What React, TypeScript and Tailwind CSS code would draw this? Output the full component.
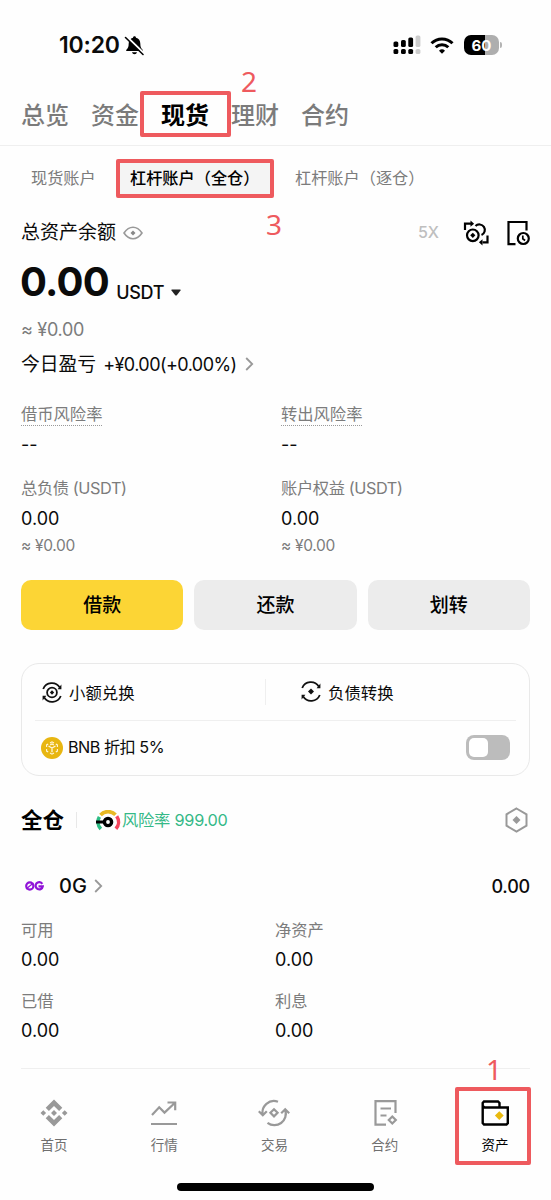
import { useState } from 'react';
import type { ReactNode } from 'react';

interface Metric {
  label: string;
  value: string;
  approx?: string;
  dotted?: boolean;
}

const tabs = ['总览', '资金', '现货', '理财', '合约'];

const riskMetrics: Metric[] = [
  { label: '借币风险率', value: '--', dotted: true },
  { label: '转出风险率', value: '--', dotted: true },
];

const equityMetrics: Metric[] = [
  { label: '总负债 (USDT)', value: '0.00', approx: '≈ ¥0.00' },
  { label: '账户权益 (USDT)', value: '0.00', approx: '≈ ¥0.00' },
];

function StatusBar() {
  return (
    <div className="flex h-[90px] items-center pr-[49px] pl-[59px]">
      <span className="text-[23px] leading-none font-semibold tracking-[-0.2px]">10:20</span>
      <svg className="ml-1" width="21" height="21" viewBox="0 0 21 21">
        <path
          d="M10.5 1.2c-.9 0-1.5.6-1.5 1.5-2.8.7-4.3 2.9-4.3 5.8 0 3.8-1 5-2.3 6.2-.5.5-.3 1.3.5 1.3h15.2c.8 0 1-.8.5-1.3-1.3-1.2-2.3-2.4-2.3-6.2 0-2.9-1.5-5.1-4.3-5.8 0-.9-.6-1.5-1.5-1.5z"
          fill="#000"
        />
        <path d="M8 17.3h5c-.3 1.3-1.3 2-2.5 2s-2.2-.7-2.5-2z" fill="#000" />
        <path d="M3 2.2l17 16.5" stroke="#fefefe" strokeWidth="2.4" />
        <path d="M1.5 2.5l17.5 17" stroke="#000" strokeWidth="1.6" strokeLinecap="round" />
      </svg>
      <svg className="ml-auto" width="28" height="20" viewBox="0 0 28 20">
        <rect x="0.5" y="6.5" width="4.8" height="5.5" rx="1.6" />
        <rect x="8" y="5" width="4.8" height="7" rx="1.6" />
        <rect x="15.3" y="2.5" width="4.8" height="9.5" rx="1.6" />
        <rect x="22.6" y="0.5" width="4.8" height="11.5" rx="1.6" fill="#ccc" />
        <rect x="0.5" y="14" width="4.8" height="5" rx="1.6" />
        <rect x="8" y="14" width="4.8" height="5" rx="1.6" />
        <rect x="15.3" y="14" width="4.8" height="5" rx="1.6" />
        <rect x="22.6" y="14" width="4.8" height="5" rx="1.6" fill="#ccc" />
      </svg>
      <svg className="ml-[9px]" width="24" height="19" viewBox="0 0 24 19" fill="none" stroke="#000" strokeWidth="3">
        <path d="M1.5 7.2a15 15 0 0 1 21 0" />
        <path d="M5.7 11.3a9 9 0 0 1 12.6 0" />
        <path d="M12 17.8l-3-3.1a4.3 4.3 0 0 1 6 0z" fill="#000" stroke="none" />
      </svg>
      <div className="ml-[10px] flex items-center gap-px">
        <div className="flex h-5 w-[35px] items-center justify-center rounded-[7px] bg-[linear-gradient(90deg,#000_61%,#aeaeae_61%)] text-[15px] leading-none font-bold text-white">
          60
        </div>
        <div className="h-[6px] w-[2px] rounded-r bg-[#b4b4b4]" />
      </div>
    </div>
  );
}

function Chevron({ className = '' }: { className?: string }) {
  return (
    <svg className={className} width="9" height="14" viewBox="0 0 9 14" fill="none" stroke="#999" strokeWidth="1.8">
      <path d="M1.2 1l6 6-6 6" />
    </svg>
  );
}

function MetricCell({ label, value, approx, dotted }: Metric) {
  return (
    <div>
      <div className="flex h-9 items-center text-[16.3px] text-[#7c7c7c]">
        <span
          className={
            dotted
              ? 'h-6 border-b border-dotted border-[#999] leading-[24px]'
              : 'leading-6 tracking-[-0.4px]'
          }
        >
          {label}
        </span>
      </div>
      <div className="flex h-6 items-center text-[18px]">{value}</div>
      {approx && (
        <div className="flex h-8 items-center text-[15.5px] tracking-[-0.3px] text-[#7c7c7c]">{approx}</div>
      )}
    </div>
  );
}

function AssetCell({ label }: { label: string }) {
  return (
    <div>
      <div className="flex h-8 items-center text-[16.3px] text-[#7c7c7c]">{label}</div>
      <div className="flex h-[26px] items-center text-[18px]">0.00</div>
    </div>
  );
}

function SwapCoinIcon() {
  return (
    <svg width="27" height="26" viewBox="0 0 27 26" fill="none" stroke="#000" strokeWidth="2.2">
      <path d="M2 10V3.7h6" />
      <path d="M7.5 .6l3.6 3.1-3.600 3.100z" fill="#000" stroke="none" />
      <path d="M24.5 15.500v6.800h-5" />
      <path d="M19.5 19.200l-3.600 3.100 3.600 3.100z" fill="#000" stroke="none" />
      <circle cx="9.8" cy="15.3" r="5.8" />
      <path d="M12.5 6a5.5 5.5 0 1 1 6 9" />
      <path d="M9.8 12.7l2.6 2.6-2.6 2.6-2.6-2.6z" fill="#000" stroke="none" />
    </svg>
  );
}

function HistoryIcon() {
  return (
    <svg width="24" height="26" viewBox="0 0 24 26" fill="none" stroke="#000" strokeWidth="2.2">
      <path d="M20.5 10.5V2H2.500v22.200h7" />
      <circle cx="17.3" cy="18.5" r="5.5" />
      <path d="M16.8 15.5v3.3l2.3 1.7" strokeWidth="1.7" />
    </svg>
  );
}

function ConvertIcon({ ring }: { ring?: boolean }) {
  return (
    <svg width="20" height="21" viewBox="0 0 20 21" fill="none" stroke="#111" strokeWidth="1.8">
      <path d="M1.2 7A9.4 9.4 0 0 1 17.8 5.500" />
      <path d="M18.8 14A9.4 9.4 0 0 1 2.200 15.500" />
      <path d="M19.4 2.400v4.800h-3.800zM.6 18.600v-4.800h3.800z" fill="#111" stroke="none" />
      {ring && <circle cx="10" cy="10.5" r="4.9" />}
      <path
        d={ring ? 'M10 8.3l2.2 2.2-2.2 2.2-2.2-2.2z' : 'M10 7.5l3 3-3 3-3-3z'}
        fill="#111"
        stroke="none"
      />
    </svg>
  );
}

function BnbIcon() {
  return (
    <svg width="22" height="22" viewBox="0 0 22 22" fill="none">
      <circle cx="11" cy="11" r="11" fill="#e8b611" />
      <g stroke="#fff6dc" strokeWidth="1.1">
        <path d="M9 5.900l2-1.100 2 1.100M14.800 7l1.600.9v2M16.400 12.100v2l-1.600.9M13 16.100l-2 1.100-2-1.100M7.200 15l-1.600-.9v-2M5.600 9.900v-2L7.200 7" />
        <path d="M7.500 9l3.500 2 3.500-2M11 11v4.200M9.200 7.900l1.800-1 1.800 1" strokeWidth="1.3" />
      </g>
    </svg>
  );
}

function GaugeIcon() {
  return (
    <svg width="25" height="21" viewBox="0 0 25 21" fill="none" strokeWidth="3.6">
      <path d="M4.8 19A10.2 10.2 0 0 1 3.4 6.8" stroke="#2ebd85" />
      <path d="M4.5 5a10.2 10.2 0 0 1 15-.2" stroke="#e8b924" />
      <path d="M20.7 6.2a10.2 10.2 0 0 1-.8 12.6" stroke="#f6465d" />
      <circle cx="12" cy="12" r="3.6" fill="#fefefe" stroke="#000" strokeWidth="3.4" />
      <path d="M0 12h9" stroke="#000" strokeWidth="3" />
    </svg>
  );
}

function HomeIcon() {
  return (
    <svg width="28" height="28" viewBox="0 0 28 28" fill="#999">
      <path d="M14 .5l8.3 8.3-3.2 3.2L14 6.9 8.9 12l-3.2-3.2z" />
      <path d="M14 27.5l8.3-8.3-3.2-3.2-5.1 5.1L8.900 16l-3.200 3.200z" />
      <path d="M14 11l3 3-3 3-3-3zM3.3 11.2L6.1 14l-2.8 2.8L.5 14zM24.7 11.2l2.8 2.8-2.8 2.8-2.8-2.8z" />
    </svg>
  );
}

function MarketIcon() {
  return (
    <svg width="28" height="28" viewBox="0 0 28 28" fill="none" stroke="#999" strokeWidth="2.2">
      <path d="M2 16l7.2-7.7 5.3 5.3L25 3.8M17.5 3.5h7.7v7.7M1 25h26" />
    </svg>
  );
}

function TradeIcon() {
  return (
    <svg width="32" height="28" viewBox="0 0 32 28" fill="none" stroke="#999" strokeWidth="2.2">
      <path d="M20 2.8A11.4 11.4 0 0 0 4.8 16M.8 12.2l4 4 4-4" />
      <path d="M9.5 23.8A11.4 11.4 0 0 0 27.2 11M23.2 14.2l4-4 4 4" />
      <path d="M16 10.2l3.6 3.6-3.6 3.600-3.600-3.600z" />
    </svg>
  );
}

function FuturesIcon() {
  return (
    <svg width="28" height="28" viewBox="0 0 28 28" fill="none" stroke="#999" strokeWidth="2.2">
      <path d="M24.5 14V2.2h-20v23.500H15M9.500 9.500H20M9.500 16.500h6" />
      <path d="M21.3 17.5l3.500 3.500-3.500 3.500-3.500-3.500z" />
    </svg>
  );
}

function WalletIcon() {
  return (
    <svg width="28" height="28" viewBox="0 0 28 28" fill="none" stroke="#000" strokeWidth="2.4">
      <path d="M18.5 7.5V4L17 2.5H3L1.7 4v20L3 25.5h22.5l1.3-1.3V8.5H3.5L1.7 7" />
      <path d="M18.3 12.2l4.4 4.4-4.4 4.4-4.4-4.4z" fill="#e9b90e" stroke="none" />
    </svg>
  );
}

// Red frame with its step number, laid over the element it points at
function Marker({ frame, step, stepClass }: { frame: string; step: string; stepClass: string }) {
  return (
    <>
      <div className={`pointer-events-none absolute rounded-[2px] border-4 border-[#ee5a5e] ${frame}`} />
      <span
        className={`pointer-events-none absolute font-['Noto_Sans','Open_Sans',sans-serif] text-[28px] leading-[30px] text-[#ee5a5e] ${stepClass}`}
      >
        {step}
      </span>
    </>
  );
}

const navItems: { label: string; icon: ReactNode }[] = [
  { label: '首页', icon: <HomeIcon /> },
  { label: '行情', icon: <MarketIcon /> },
  { label: '交易', icon: <TradeIcon /> },
  { label: '合约', icon: <FuturesIcon /> },
  { label: '资产', icon: <WalletIcon /> },
];

export default function App() {
  const [activeTab, setActiveTab] = useState('现货');
  const [discount, setDiscount] = useState(false);

  return (
    <div className="relative h-[1200px] w-[551px] overflow-hidden bg-[#fefefe] font-['Inter','Noto_Sans_CJK_SC',sans-serif] text-[#0b0b0b]">
      <StatusBar />

      {/* Tabs */}
      <nav className="flex h-14 gap-[22px] border-b border-[#efefef] pl-[21px]">
        {tabs.map((tab) => (
          <button
            key={tab}
            onClick={() => setActiveTab(tab)}
            className={`h-[52px] text-[24px] whitespace-nowrap ${
              tab === activeTab ? 'font-bold text-black' : 'font-medium text-[#7b7b7b]'
            }`}
          >
            {tab}
          </button>
        ))}
      </nav>

      {/* Account types */}
      <div className="flex h-16 items-center pl-[31px] text-[16.2px] whitespace-nowrap text-[#7c7c7c]">
        <span className="mt-px w-[65px]">现货账户</span>
        <span className="ml-6 flex h-[34px] w-[151px] items-center bg-[#f4f4f4] pt-px pl-[10px] font-medium text-black">
          杠杆账户（全仓）
        </span>
        <span className="mt-px ml-6">杠杆账户（逐仓）</span>
      </div>

      <main className="px-[21px]">
        {/* Balance */}
        <div className="flex h-11 items-center">
          <span className="mt-[3px] text-[19px]">总资产余额</span>
          <svg className="mt-px ml-[7px]" width="20" height="14" viewBox="0 0 20 14" fill="none" stroke="#999" strokeWidth="1.6">
            <path d="M1 7c2.5-3.7 5.5-5.7 9-5.7S16.5 3.3 19 7c-2.5 3.7-5.5 5.7-9 5.7S3.5 10.7 1 7z" />
            <path d="M10 4.5l2.5 2.5-2.5 2.5L7.5 7z" fill="#888" stroke="none" />
          </svg>
          <span className="ml-auto text-[16px] font-medium text-[#bfbfbf]">5X</span>
          <div className="ml-6 flex gap-4 pt-px">
            <SwapCoinIcon />
            <HistoryIcon />
          </div>
        </div>
        <div className="flex h-[55px] items-center">
          <span className="-ml-px text-[40px] leading-none font-bold tracking-[-0.7px]">0.00</span>
          <span className="mt-[22px] ml-[7px] text-[18px] leading-none font-medium tracking-[-0.3px]">USDT</span>
          <svg className="mt-[21px] ml-[7px]" width="10" height="7" viewBox="0 0 10 7">
            <path d="M1 .5h8q1 0 .5.9L6 6q-1 1-2 0L.5 1.4Q0 .5 1 .5z" fill="#222" />
          </svg>
        </div>
        <div className="flex h-10 items-center text-[18px] tracking-[-0.3px] text-[#7c7c7c]">≈ ¥0.00</div>
        <div className="flex h-[30px] items-center text-[18.8px]">
          <span className="mt-[3px]">今日盈亏</span>
          <span className="ml-[7px] text-[18px] tracking-[-0.55px]">+¥0.00(+0.00%)</span>
          <Chevron className="ml-2" />
        </div>

        <div className="mt-[17px] grid grid-cols-[260px_1fr]">
          {riskMetrics.map((m) => (
            <MetricCell key={m.label} {...m} />
          ))}
        </div>
        <div className="mt-[14px] grid grid-cols-[260px_1fr]">
          {equityMetrics.map((m) => (
            <MetricCell key={m.label} {...m} />
          ))}
        </div>

        {/* Actions */}
        <div className="mt-[18px] grid h-[50px] grid-cols-3 gap-[11px] text-[19px] font-medium text-black">
          <button className="rounded-[10px] bg-[#fcd535] pt-[2px]">借款</button>
          <button className="rounded-[10px] bg-[#ececec] pt-[2px]">还款</button>
          <button className="rounded-[10px] bg-[#ececec] pt-[2px]">划转</button>
        </div>

        {/* Tools card */}
        <div className="mt-[33px] h-[113px] rounded-[18px] border border-[#e9e9e9] px-[13px] text-[16.4px]">
          <div className="flex h-[57px] items-center border-b border-[#efefef] pl-[7px]">
            <div className="flex h-[26px] w-[224px] items-center gap-[7px] border-r border-[#efefef]">
              <ConvertIcon ring />
              <span className="mt-[2px]">小额兑换</span>
            </div>
            <div className="ml-[35px] flex items-center gap-[7px]">
              <ConvertIcon />
              <span className="mt-[2px]">负债转换</span>
            </div>
          </div>
          <div className="flex h-[53px] items-center pr-[6px] pl-[6px]">
            <BnbIcon />
            <span className="ml-[5px] text-[16.2px] tracking-[-0.5px]">BNB 折扣 5%</span>
            <button
              role="switch"
              aria-checked={discount}
              aria-label="BNB 折扣"
              onClick={() => setDiscount(!discount)}
              className={`ml-auto flex h-[25px] w-[44px] items-center rounded-[8px] px-[3px] ${
                discount ? 'justify-end bg-[#fcd535]' : 'bg-[#bcbcbc]'
              }`}
            >
              <span className="size-[19px] rounded-[5px] bg-white" />
            </button>
          </div>
        </div>

        {/* Cross margin */}
        <div className="mt-6 flex h-10 items-center">
          <h2 className="text-[21.5px] font-bold text-black">全仓</h2>
          <div className="ml-3 h-4 w-px bg-[#e8e8e8]" />
          <div className="ml-[19px] flex items-center gap-px text-[16.3px] text-[#35b987]">
            <GaugeIcon />
            <span className="tracking-[-0.25px]">风险率 999.00</span>
          </div>
          <svg className="mr-[2px] ml-auto" width="23" height="26" viewBox="0 0 23 26" fill="none" stroke="#999" strokeWidth="2">
            <path d="M11.5 1.5l10 5.8v11.4l-10 5.8-10-5.8V7.3z" />
            <path d="M11.5 9l4 4-4 4-4-4z" fill="#999" stroke="none" />
          </svg>
        </div>

        {/* Asset */}
        <div className="mt-[26px] flex h-10 items-center">
          <svg className="ml-1" width="19" height="10" viewBox="0 0 19 10" fill="none" stroke="#9013d8" strokeWidth="2.2">
            <circle cx="4.8" cy="5" r="3.6" />
            <path d="M1 8l7.5-6" strokeWidth="1.2" />
            <path d="M17.3 2.8A3.6 3.6 0 1 0 17.8 5.3H13.5" />
          </svg>
          <span className="ml-[15px] text-[20px] font-medium">0G</span>
          <Chevron className="ml-[7px]" />
          <span className="ml-auto text-[18px] font-medium tracking-[-0.2px]">0.00</span>
        </div>
        <div className="mt-2 grid grid-cols-[254px_1fr] gap-y-[13px]">
          {['可用', '净资产', '已借', '利息'].map((label) => (
            <AssetCell key={label} label={label} />
          ))}
        </div>
      </main>

      {/* Bottom navigation */}
      <footer className="mt-[25px]">
        <div className="mx-[21px] h-px bg-[#efefef]" />
        <div className="-ml-px grid w-[551px] grid-cols-5 pt-[30px]">
          {navItems.map((item) => (
            <button
              key={item.label}
              className={`flex flex-col items-center gap-2 text-[13.5px] leading-5 ${
                item.label === '资产' ? 'text-black' : 'text-[#6f6f6f]'
              }`}
            >
              {item.icon}
              <span>{item.label}</span>
            </button>
          ))}
        </div>
        <div className="mx-auto mt-7 h-2 w-[197px] rounded-full bg-black" />
      </footer>

      <Marker frame="top-[91px] left-[140px] h-[46px] w-[91px]" step="2" stepClass="top-[66px] left-[241px]" />
      <Marker frame="top-[159px] left-[116px] h-[39px] w-[158px]" step="3" stepClass="top-[209px] left-[266px]" />
      <Marker frame="top-[1087px] left-[455px] h-[78px] w-[76px]" step="1" stepClass="top-[1054px] left-[486px]" />
    </div>
  );
}
